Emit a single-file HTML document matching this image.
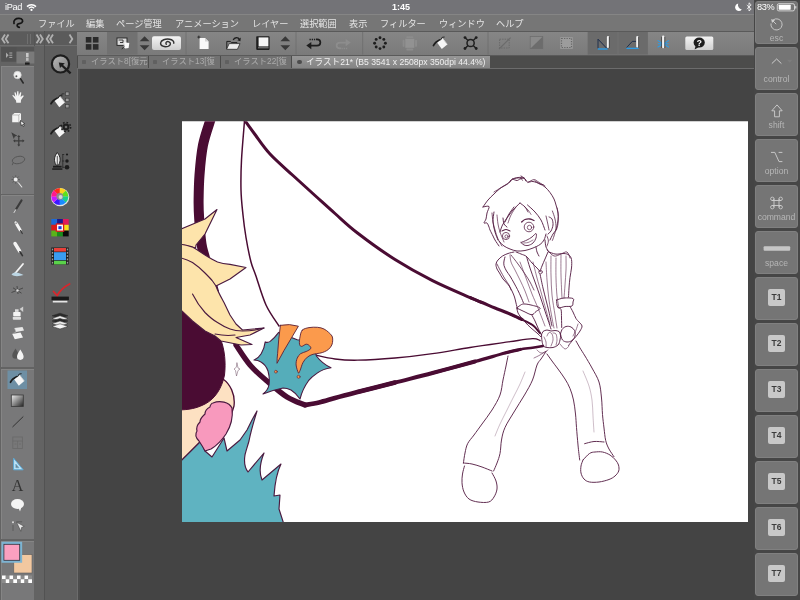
<!DOCTYPE html>
<html lang="ja">
<head>
<meta charset="utf-8">
<title>CLIP STUDIO PAINT</title>
<style>
*{box-sizing:border-box;margin:0;padding:0}
html,body{width:800px;height:600px;overflow:hidden;background:#444444}
body{position:relative;font-family:"Liberation Sans","Noto Sans CJK JP",sans-serif;color:#fff;-webkit-font-smoothing:antialiased}
.abs{position:absolute}
#status span,#menubar span,.tab,.key b,.key em,.st{will-change:transform}
#status{left:0;top:0;width:800px;height:14px;background:#737377}
#status span{position:absolute;top:1px;font-size:9.2px;line-height:12px;color:#fff;white-space:nowrap;letter-spacing:-0.35px}
#menubar{left:0;top:14px;width:800px;height:17px;background:#767676;border-top:1px solid #858585}
#menubar span{position:absolute;top:3px;font-size:9.2px;line-height:12px;color:#e4e4e4;white-space:nowrap}
#cmdbar{left:76px;top:31px;width:680px;height:24px;background:linear-gradient(#868686,#7a7a7a);border-top:1px solid #5a5a5a;border-left:1px solid #5a5a5a}
#tabrow{left:77px;top:55px;width:679px;height:14px;background:#4c4c4b;border-top:1px solid #5a5a5a;border-bottom:1px solid #6c6c6c}
.tab{position:absolute;top:0;height:11.6px;background:#717171;color:#ababab;font-size:8.3px;line-height:11.6px;white-space:nowrap;overflow:hidden;padding-left:13px}
.tab i{position:absolute;left:4.4px;top:4px;width:3.6px;height:3.6px;background:#606060;border-radius:.8px}
.tab.on{background:linear-gradient(#969696,#848484);color:#f0f0f0;font-size:8.6px;height:12.4px;top:-0.4px;line-height:12.4px;padding-left:14px}
.tab.on i{background:#4c4c4c;border-radius:2.2px;left:5.2px;top:3.6px;width:4.4px;height:4.4px}
#canvasbg{left:80px;top:69px;width:675px;height:531px;background:#444444}
#paper{left:182px;top:121px;width:566px;height:400px;background:#fff}
#col1{left:0;top:31px;width:44px;height:569px;background:#636363}
#col2{left:44px;top:31px;width:32.5px;height:569px;background:#5e5e5e;border-left:1px solid #525252}
#coldiv{left:76.5px;top:69px;width:3.5px;height:532px;background:#4b4b4b;border-left:1px solid #6c6c6c}
#navrow{left:0;top:31.5px;width:76.5px;height:14px;background:#5b5b5b;border-bottom:1px solid #6f6f6f}
.grp{position:absolute;left:1px;width:33px;background:#787879;border-left:1px solid #858585;border-top:1px solid #858585}
#right{left:754px;top:0;width:46px;height:600px;background:#464646}
.key{position:absolute;left:755px;width:43px;height:43px;background:#757575;border-radius:3px;border:1px solid #808080}
.key b{position:absolute;left:0;right:0;bottom:5px;text-align:center;font-weight:normal;font-size:8.6px;line-height:10px;color:#b6b6b6}
.key em{position:absolute;left:12.3px;top:10.8px;width:17px;height:17px;border-radius:2px;background:#c8c8c8;color:#3c3c3c;font-style:normal;font-weight:bold;font-size:8.5px;line-height:17px;text-align:center}
svg{position:absolute;left:0;top:0}
</style>
</head>
<body>
<div class="abs" id="canvasbg"></div>
<!--ARTS--><svg width="800" height="600" viewBox="0 0 800 600"><defs><clipPath id="pc"><rect x="182" y="121.25" width="566" height="400.75"/></clipPath></defs><rect x="182" y="121.25" width="566" height="400.75" fill="#fff"/>
<g clip-path="url(#pc)" fill="none" stroke-linecap="round" stroke-linejoin="round">
<path d="M211.0,118.0 C209.7,122.5 204.9,135.5 203.0,145.0 C201.1,154.5 200.2,165.8 199.5,175.0 C198.8,184.2 198.7,192.7 198.6,200.0 C198.5,207.3 198.7,211.7 199.2,219.0 C199.7,226.3 200.5,237.5 201.5,244.0 C202.5,250.5 202.9,250.0 205.0,258.0 C207.1,266.0 212.5,286.3 214.0,292.0" stroke="#4a0c33" stroke-width="10"/>
<path d="M176,400 L223,379 C230,384 235.5,394 234,406 L229,422 L220,437 L208,449 L201,441 L176,466 Z" fill="#fde1c2" stroke="#4a0c33" stroke-width="1.3"/>
<path d="M176,303 L192.5,320 L205,330 L215,335 L221,340 C224.5,350 226,362 224.5,375 C222,388 215,399 205,404 C197,408 190,410 176,410 Z" fill="#4a0c33" stroke="#4a0c33" stroke-width="1"/>
<path d="M176,466 L201,441 L205,451 L212,457 L224,438 L227,451 L240,440 L247,430 L252,420 L257,411 C253,424 250.5,433 249,441 C247,448 245.5,452 245,455 C244,461 245,468 248,472 L264,453 C260,463 259,473 262,480 L281,464 C277,472 275,481 274,496 L280,495 L279,509 L283.5,523 L176,523 Z" fill="#5fb3c1" stroke="#4a1a40" stroke-width="1.15"/>
<path d="M213,403 C220,400 229,402 232,408 C233,416 231,426 226,434 C222,440 216,446 211,449 L205,451 C203,447 201,444 199,441 C196,438 195,434 197,431 C196,427 198,424 200,422 C200,418 203,416 205,414 C205,410 208,408 210,407 C210,405 212,403 213,403 Z" fill="#f899bd" stroke="#4a1a40" stroke-width="1.15"/>
<path d="M236.0,345.0 C238.3,348.3 244.8,359.0 250.0,365.0 C255.2,371.0 260.8,375.7 267.0,381.0 C273.2,386.3 280.7,393.0 287.0,397.0 C293.3,401.0 302.0,403.7 305.0,405.0" stroke="#4a0c33" stroke-width="5.4"/>
<path d="M305.0,405.0 C307.3,404.6 314.0,403.7 319.0,402.5 C324.0,401.3 328.6,399.8 335.0,398.0 C341.4,396.2 347.5,394.6 357.5,392.0 C367.5,389.4 388.8,384.1 395.0,382.5" stroke="#4a0c33" stroke-width="4.6"/>
<path d="M357.5,392.0 C363.8,390.4 382.5,385.7 395.0,382.5 C407.5,379.3 419.2,376.5 432.5,373.0 C445.8,369.5 467.9,363.4 475.0,361.5" stroke="#4a0c33" stroke-width="3.9"/>
<path d="M432.5,373.0 C439.6,371.1 462.9,364.8 475.0,361.5 C487.1,358.2 497.5,355.0 505.0,353.0 C512.5,351.0 517.5,350.1 520.0,349.5" stroke="#4a0c33" stroke-width="3.3"/>
<path d="M505.0,353.0 C507.5,352.4 515.4,350.4 520.0,349.5 C524.6,348.6 528.7,348.3 532.5,347.7 C536.3,347.1 541.2,346.3 543.0,346.0" stroke="#4a0c33" stroke-width="2.4"/>
<path d="M315.0,355.0 C318.3,355.7 327.9,358.1 335.0,359.0 C342.1,359.9 347.5,360.4 357.5,360.2 C367.5,360.0 382.5,359.1 395.0,358.0 C407.5,356.9 420.0,355.4 432.5,353.6 C445.0,351.9 457.1,349.5 470.0,347.5 C482.9,345.5 499.6,343.2 510.0,341.7 C520.4,340.2 527.5,338.9 532.5,338.7 C537.5,338.5 538.8,340.2 540.0,340.5" stroke="#4a0c33" stroke-width="1.3"/>
<path d="M244.5,120.0 C246.2,122.4 250.8,128.8 255.0,134.5 C259.2,140.2 263.7,147.2 270.0,154.0 C276.3,160.8 285.5,168.6 293.0,175.5 C300.5,182.4 308.0,189.2 315.0,195.5 C322.0,201.8 327.9,207.2 335.0,213.5 C342.1,219.8 347.5,225.3 357.5,233.0 C367.5,240.7 382.5,251.6 395.0,259.5 C407.5,267.4 420.0,274.3 432.5,280.6 C445.0,286.9 461.8,293.9 470.0,297.5 C478.2,301.1 480.0,301.7 482.0,302.5" stroke="#4a0c33" stroke-width="3"/>
<path d="M470.0,297.5 C472.0,298.3 477.8,300.8 482.0,302.5 C486.2,304.2 490.3,306.1 495.0,308.0 C499.7,309.9 505.5,312.1 510.0,314.0 C514.5,315.9 520.0,318.6 522.0,319.5" stroke="#4a0c33" stroke-width="3.1"/>
<path d="M510.0,314.0 C512.0,314.9 518.2,317.7 522.0,319.5 C525.8,321.3 529.5,322.8 532.5,325.0 C535.5,327.2 538.8,331.7 540.0,333.0" stroke="#4a0c33" stroke-width="2"/>
<path d="M244.5,121.0 C244.0,127.5 242.1,148.5 241.5,160.0 C240.9,171.5 240.8,180.8 241.0,190.0 C241.2,199.2 242.2,207.1 243.0,215.0 C243.8,222.9 244.7,229.7 246.0,237.5 C247.3,245.3 249.4,255.8 251.0,262.0 C252.6,268.2 253.1,267.8 255.6,275.0 C258.1,282.2 262.1,296.5 266.0,305.0 C269.9,313.5 276.8,322.5 279.0,326.0" stroke="#4a0c33" stroke-width="1.5"/>
<path d="M181,229 L205,219 L217,209.5 L205,234 L196,245 L195.6,248 L181,244.4 Z" fill="#fde4ab" stroke="#4a1a40" stroke-width="1.15"/>
<path d="M181,244.4 C186,245 189,246 192.5,247 C197,249.5 201,252.5 205,255 C209,257.5 213,260 217.5,262 C222,263.5 226,264 230,264.4 L246,267.5 L230,279 L216,286 C218,292 221,297 224,302.5 L230,315 L236,324 L242.5,330 L264,328 L250,335 L236,337.5 L252,344.5 L241,345 L221,341 L215,336 L205,331 L192.5,321 L181,310 Z" fill="#fde4ab" stroke="#4a1a40" stroke-width="1.15"/>
<path d="M181,258 C186,259 189,260.5 192.5,262.5 C197,265.5 201,269 205,273 C208,276 211,279 212.5,281 L216,286" stroke="#4a1a40" stroke-width="1.15"/>
<path d="M192.5,294 C196,301 200,307 205,312.5 C209,316.5 213,320 217.5,322.5 C222,325.5 226,327.5 230,329 C234,330.5 238,331 242.5,331 C250,331 257,330 264,328" stroke="#4a1a40" stroke-width="1.15"/>
<path d="M215,334 C222,335.5 228,336 235,335" stroke="#4a1a40" stroke-width="1.15"/>
<path d="M254,360 Q259,357.5 261.2,353.7 Q264.5,348 265.2,341.9 Q267.5,343 270.2,341.4 Q275,337.5 278.7,332.4 L297.2,339.8 L306,341 L314,346 L316.4,356 Q322,363.5 331,367.8 Q323,369 317.5,372.9 Q311.5,377 308.5,380.7 Q302.5,389 300,399 Q296,393 291,390 Q287,388 283,388 Q273,390 263,394 Q268,390 269,385 Q270,378 268,371 Q266,365 261,362 Q258,360 254,360 Z" fill="#55adba" stroke="#4a1a40" stroke-width="1.1"/>
<path d="M280.4,325.3 Q289.4,323.4 298.4,326.2 Q292,337 284,350.5 L277,363.3 Q277,358 277.6,353.7 Q278.5,339 280.4,325.3 Z" fill="#fb9a4c" stroke="#5a2038" stroke-width="0.9"/>
<circle cx="275.9" cy="371.7" r="1.4" fill="#fb9a4c" stroke="#5a2038" stroke-width="0.6"/>
<path d="M302.3,330.1 C303.8,328.6 306.5,328.1 309.0,327.6 C311.5,327.1 315.0,327.1 317.5,327.3 C320.0,327.5 322.1,328.1 324.0,329.0 C325.9,329.9 327.4,331.2 328.7,332.4 C330.0,333.6 331.3,334.7 332.0,336.0 C332.7,337.3 332.7,338.7 332.7,340.2 C332.7,341.7 332.5,343.5 331.8,345.0 C331.1,346.5 329.9,348.1 328.7,349.2 C327.5,350.3 326.0,351.0 324.5,351.7 C323.0,352.4 321.6,352.8 319.7,353.2 C317.8,353.6 315.1,353.6 313.0,354.3 C310.9,355.0 309.1,355.7 307.4,357.1 C305.7,358.5 304.1,360.4 302.9,362.7 C301.7,364.9 300.8,368.9 300.0,370.6 C299.2,372.3 299.0,373.8 298.4,372.9 C297.8,372.0 296.3,367.4 296.1,365.0 C295.9,362.6 296.4,360.1 297.2,358.2 C297.9,356.3 299.1,354.8 300.6,353.7 C302.1,352.6 304.5,352.3 306.2,351.5 C307.9,350.7 310.1,349.6 310.7,348.7 C311.3,347.8 310.4,346.6 309.6,345.9 C308.9,345.1 307.5,344.1 306.2,344.2 C304.9,344.3 302.8,346.4 301.7,346.4 C300.6,346.4 299.8,345.8 299.5,344.2 C299.2,342.6 299.5,339.2 300.0,336.9 C300.5,334.5 300.8,331.7 302.3,330.1 Z" fill="#fb9a4c" stroke="#5a2038" stroke-width="0.9"/>
<circle cx="298.6" cy="376.8" r="1.5" fill="#fb9a4c" stroke="#5a2038" stroke-width="0.6"/>
<path d="M237,363 L238,368 L240,369 L238,370.5 L236.5,376 L235.5,370.5 L234,369 L236,367.5 Z" stroke="#6a4a60" stroke-width="0.5" fill="#fff"/>
<path d="M483.0,207.0 C483.8,205.8 486.2,202.2 488.0,200.0 C489.8,197.8 492.0,195.9 494.0,194.0 C496.0,192.1 497.8,190.2 500.0,188.5 C502.2,186.8 505.8,185.2 507.5,184.0 C509.2,182.8 509.2,181.8 510.0,181.0 C510.8,180.2 511.2,179.6 512.5,179.0 C513.8,178.4 516.1,177.7 518.0,177.5 C519.9,177.3 522.4,177.2 524.0,178.0 C525.6,178.8 526.0,181.4 527.5,182.0 C529.0,182.6 530.9,181.2 533.0,181.5 C535.1,181.8 538.0,183.1 540.0,184.0 C542.0,184.9 543.3,185.6 545.0,187.0 C546.7,188.4 548.5,190.5 550.0,192.5 C551.5,194.5 553.0,196.9 554.0,199.0 C555.0,201.1 555.3,202.7 556.0,205.0 C556.7,207.3 557.7,210.5 558.0,213.0 C558.3,215.5 558.2,217.8 558.0,220.0 C557.8,222.2 557.3,224.3 557.0,226.0 C556.7,227.7 556.7,228.7 556.0,230.0 C555.3,231.3 554.0,232.3 553.0,234.0 C552.0,235.7 550.5,239.0 550.0,240.0" stroke="#5a2449" stroke-width="0.95"/>
<path d="M483.0,207.0 C484.0,206.9 488.3,205.5 489.0,206.5 C489.7,207.5 487.5,210.9 487.0,213.0 C486.5,215.1 486.5,217.3 486.0,219.0 C485.5,220.7 483.8,222.3 484.0,223.0 C484.2,223.7 486.2,222.3 487.0,223.0 C487.8,223.7 488.5,225.8 489.0,227.0 C489.5,228.2 489.3,228.5 490.0,230.0 C490.7,231.5 492.2,234.3 493.0,236.0 C493.8,237.7 494.0,238.3 495.0,240.0 C496.0,241.7 498.3,245.0 499.0,246.0" stroke="#5a2449" stroke-width="0.95"/>
<path d="M512.5,179.0 C513.2,179.2 515.8,180.5 517.0,180.5 C518.2,180.5 518.8,179.4 520.0,179.0 C521.2,178.6 523.3,178.2 524.0,178.0" stroke="#5a2449" stroke-width="0.95"/>
<path d="M521.0,176.0 C521.5,176.3 523.2,177.2 524.0,178.0 C524.8,178.8 525.7,180.5 526.0,181.0" stroke="#5a2449" stroke-width="0.95"/>
<path d="M535.0,181.0 C535.8,181.5 538.7,183.4 540.0,184.0 C541.3,184.6 542.5,184.4 543.0,184.5" stroke="#5a2449" stroke-width="0.95"/>
<path d="M520.0,203.0 C518.8,204.2 515.2,207.5 513.0,210.0 C510.8,212.5 508.8,215.5 507.0,218.0 C505.2,220.5 503.7,222.7 502.5,225.0 C501.3,227.3 500.4,230.8 500.0,232.0" stroke="#5a2449" stroke-width="0.95"/>
<path d="M520.0,203.0 C520.8,203.7 523.7,205.5 525.0,207.0 C526.3,208.5 527.5,211.2 528.0,212.0" stroke="#5a2449" stroke-width="0.95"/>
<path d="M527.5,205.0 C528.8,206.2 532.8,209.5 535.0,212.0 C537.2,214.5 539.3,217.0 541.0,220.0 C542.7,223.0 544.3,228.3 545.0,230.0" stroke="#5a2449" stroke-width="0.95"/>
<path d="M514.0,207.0 C513.2,208.2 510.5,211.5 509.0,214.0 C507.5,216.5 505.7,220.7 505.0,222.0" stroke="#5a2449" stroke-width="0.95"/>
<path d="M494.0,212.0 C493.8,213.7 492.8,218.7 493.0,222.0 C493.2,225.3 494.2,229.0 495.0,232.0 C495.8,235.0 497.5,238.7 498.0,240.0" stroke="#5a2449" stroke-width="0.95"/>
<path d="M503.0,218.0 C503.2,219.0 503.3,222.5 504.0,224.0 C504.7,225.5 506.5,226.5 507.0,227.0" stroke="#5a2449" stroke-width="0.95"/>
<path d="M549.0,217.0 C549.5,217.3 551.3,217.7 552.0,219.0 C552.7,220.3 553.2,223.0 553.0,225.0 C552.8,227.0 551.8,229.5 551.0,231.0 C550.2,232.5 548.5,233.5 548.0,234.0" stroke="#5a2449" stroke-width="0.95"/>
<path d="M499.5,241.5 C500.2,242.2 502.2,244.8 504.0,246.0 C505.8,247.2 507.8,248.2 510.0,249.0 C512.2,249.8 514.5,250.8 517.0,251.0 C519.5,251.2 522.3,251.0 525.0,250.5 C527.7,250.0 530.5,249.0 533.0,248.0 C535.5,247.0 538.2,245.8 540.0,244.5 C541.8,243.2 543.0,241.8 544.0,240.0 C545.0,238.2 545.7,235.0 546.0,234.0" stroke="#5a2449" stroke-width="0.95"/>
<path d="M502.0,231.0 C502.7,230.8 504.7,229.5 506.0,229.5 C507.3,229.5 509.3,230.8 510.0,231.0" stroke="#5a2449" stroke-width="1.1"/>
<circle cx="506" cy="236" r="3.6" stroke="#5a2449" stroke-width="0.8"/>
<circle cx="506.5" cy="236.5" r="1.6" stroke="#5a2449" stroke-width="0.7"/>
<path d="M521.5,222.0 C522.1,221.6 523.6,220.0 525.0,219.5 C526.4,219.0 528.5,218.8 530.0,219.0 C531.5,219.2 533.3,220.2 534.0,220.5" stroke="#5a2449" stroke-width="1.3"/>
<circle cx="529" cy="227" r="4.8" stroke="#5a2449" stroke-width="0.8"/>
<circle cx="529.5" cy="227.5" r="2.2" stroke="#5a2449" stroke-width="0.7"/>
<path d="M521.0,242.5 C522.0,242.1 525.2,240.9 527.0,240.0 C528.8,239.1 530.5,238.1 532.0,237.0 C533.5,235.9 535.3,233.3 536.0,233.5 C536.7,233.7 536.5,236.4 536.0,238.0 C535.5,239.6 534.3,241.8 533.0,243.0 C531.7,244.2 529.5,245.2 528.0,245.5 C526.5,245.8 525.2,245.5 524.0,245.0 C522.8,244.5 521.5,242.9 521.0,242.5" stroke="#5a2449" stroke-width="0.9"/>
<path d="M523.0,243.0 C523.8,242.9 526.3,243.0 528.0,242.5 C529.7,242.0 532.2,240.4 533.0,240.0" stroke="#5a2449" stroke-width="0.6"/>
<path d="M536.0,247.0 C536.2,247.8 536.5,250.5 537.0,252.0 C537.5,253.5 538.7,255.3 539.0,256.0" stroke="#5a2449" stroke-width="0.95"/>
<path d="M545.0,240.0 C545.2,241.2 545.3,245.0 546.0,247.0 C546.7,249.0 548.5,251.2 549.0,252.0" stroke="#5a2449" stroke-width="0.95"/>
<path d="M514.0,252.0 C513.0,252.2 509.9,252.8 508.0,253.5 C506.1,254.2 504.2,254.9 502.5,256.0 C500.8,257.1 499.1,258.7 498.0,260.0 C496.9,261.3 496.2,262.5 496.0,264.0 C495.8,265.5 496.4,267.5 497.0,269.0 C497.6,270.5 498.5,271.3 499.5,273.0 C500.5,274.7 501.5,277.0 503.0,279.0 C504.5,281.0 507.0,283.0 508.5,285.0 C510.0,287.0 511.0,289.0 512.0,291.0 C513.0,293.0 513.8,295.0 514.5,297.0 C515.2,299.0 515.5,301.0 516.0,303.0 C516.5,305.0 517.2,308.0 517.5,309.0" stroke="#5a2449" stroke-width="0.95"/>
<path d="M505.0,257.0 C504.8,257.7 504.2,259.6 504.0,261.0 C503.8,262.4 503.6,263.8 504.0,265.5 C504.4,267.2 505.5,269.2 506.5,271.0 C507.5,272.8 508.8,274.0 510.0,276.0 C511.2,278.0 512.8,280.8 514.0,283.0 C515.2,285.2 516.3,287.2 517.5,289.5 C518.7,291.8 520.0,294.8 521.0,297.0 C522.0,299.2 523.1,302.0 523.5,303.0" stroke="#5a2449" stroke-width="0.95"/>
<path d="M510.0,255.0 C510.2,256.2 510.2,259.5 511.0,262.0 C511.8,264.5 513.5,267.0 515.0,270.0 C516.5,273.0 518.3,276.5 520.0,280.0 C521.7,283.5 523.5,287.3 525.0,291.0 C526.5,294.7 528.3,300.2 529.0,302.0" stroke="#5a2449" stroke-width="0.6"/>
<path d="M516.0,252.0 C516.8,252.3 519.2,253.2 521.0,254.0 C522.8,254.8 524.7,255.0 526.5,256.5 C528.3,258.0 530.2,261.1 532.0,263.0 C533.8,264.9 535.7,266.6 537.0,268.0 C538.3,269.4 539.5,270.9 540.0,271.5" stroke="#5a2449" stroke-width="0.95"/>
<path d="M548.0,252.0 C547.5,253.2 546.0,256.7 545.0,259.0 C544.0,261.3 542.8,263.9 542.0,266.0 C541.2,268.1 540.3,270.6 540.0,271.5" stroke="#5a2449" stroke-width="0.95"/>
<circle cx="540.5" cy="272" r="1.8" stroke="#5a2449" stroke-width="0.7"/>
<path d="M526.5,256.5 C527.1,258.4 528.6,263.8 530.0,268.0 C531.4,272.2 533.3,277.3 535.0,282.0 C536.7,286.7 538.5,291.7 540.0,296.0 C541.5,300.3 542.7,304.0 544.0,308.0 C545.3,312.0 546.8,316.5 548.0,320.0 C549.2,323.5 550.5,327.5 551.0,329.0" stroke="#5a2449" stroke-width="0.95"/>
<path d="M540.0,274.0 C540.5,276.3 542.0,283.7 543.0,288.0 C544.0,292.3 545.0,296.0 546.0,300.0 C547.0,304.0 548.0,307.7 549.0,312.0 C550.0,316.3 551.5,323.7 552.0,326.0" stroke="#5a2449" stroke-width="0.95"/>
<path d="M533.0,262.0 C533.7,264.7 535.7,273.0 537.0,278.0 C538.3,283.0 539.5,286.7 541.0,292.0 C542.5,297.3 544.5,304.7 546.0,310.0 C547.5,315.3 549.3,321.7 550.0,324.0" stroke="#5a2449" stroke-width="0.6"/>
<path d="M520.0,262.0 C521.0,264.7 524.0,272.7 526.0,278.0 C528.0,283.3 530.0,289.0 532.0,294.0 C534.0,299.0 535.8,302.7 538.0,308.0 C540.2,313.3 543.8,323.0 545.0,326.0" stroke="#5a2449" stroke-width="0.6"/>
<path d="M546.0,262.0 C546.2,265.0 546.5,273.7 547.0,280.0 C547.5,286.3 548.2,293.7 549.0,300.0 C549.8,306.3 551.2,313.3 552.0,318.0 C552.8,322.7 553.7,326.3 554.0,328.0" stroke="#5a2449" stroke-width="0.6"/>
<path d="M551.0,256.0 C551.0,259.2 550.8,268.5 551.0,275.0 C551.2,281.5 551.3,288.3 552.0,295.0 C552.7,301.7 554.2,309.5 555.0,315.0 C555.8,320.5 556.7,325.8 557.0,328.0" stroke="#5a2449" stroke-width="0.6"/>
<path d="M556.0,258.0 C556.0,261.3 555.8,271.7 556.0,278.0 C556.2,284.3 556.5,291.0 557.0,296.0 C557.5,301.0 558.7,306.0 559.0,308.0" stroke="#5a2449" stroke-width="0.6"/>
<path d="M561.0,255.0 C561.0,258.3 560.8,267.8 561.0,275.0 C561.2,282.2 561.8,294.2 562.0,298.0" stroke="#5a2449" stroke-width="0.6"/>
<path d="M549.0,252.0 C550.0,252.3 553.3,253.7 555.0,254.0 C556.7,254.3 557.5,254.1 559.0,254.0 C560.5,253.9 562.3,253.3 564.0,253.5 C565.7,253.7 567.8,254.0 569.0,255.0 C570.2,256.0 571.1,257.3 571.5,259.5 C571.9,261.7 571.8,265.0 571.5,268.0 C571.2,271.0 570.4,274.2 570.0,277.5 C569.6,280.8 569.2,284.8 569.0,288.0 C568.8,291.2 568.6,295.5 568.5,297.0" stroke="#5a2449" stroke-width="0.95"/>
<path d="M566.0,256.0 C566.0,258.3 566.2,265.2 566.0,270.0 C565.8,274.8 565.3,280.3 565.0,285.0 C564.7,289.7 564.2,295.8 564.0,298.0" stroke="#5a2449" stroke-width="0.6"/>
<path d="M556.5,300.0 C557.8,299.7 561.2,298.2 564.0,298.0 C566.8,297.8 571.5,297.8 573.0,298.5 C574.5,299.2 573.2,300.8 573.0,302.0 C572.8,303.2 573.3,305.2 572.0,306.0 C570.7,306.8 567.3,306.2 565.0,306.5 C562.7,306.8 559.4,308.6 558.0,307.5 C556.6,306.4 556.8,301.2 556.5,300.0" stroke="#5a2449" stroke-width="0.95"/>
<path d="M558.0,307.5 C558.5,307.8 560.4,307.8 561.0,309.5 C561.6,311.2 561.4,315.0 561.5,318.0 C561.6,321.0 561.7,325.9 561.7,327.5" stroke="#5a2449" stroke-width="0.95"/>
<path d="M570.0,306.5 C570.5,307.4 572.0,310.0 573.0,312.0 C574.0,314.0 575.0,316.8 576.0,318.5 C577.0,320.2 578.0,320.8 579.0,322.0 C580.0,323.2 581.8,324.5 582.0,326.0 C582.2,327.5 581.0,329.2 580.0,331.0 C579.0,332.8 577.3,334.8 576.0,336.5 C574.7,338.2 573.2,339.5 572.0,341.0 C570.8,342.5 569.1,344.8 568.5,345.5" stroke="#5a2449" stroke-width="0.95"/>
<path d="M578.0,324.0 C577.7,325.0 576.8,328.0 576.0,330.0 C575.2,332.0 573.5,335.0 573.0,336.0" stroke="#5a2449" stroke-width="0.6"/>
<path d="M516.7,308.0 C517.2,307.6 518.9,306.2 520.0,305.5 C521.1,304.8 521.7,304.1 523.5,304.0 C525.3,303.9 528.2,304.3 531.0,305.0 C533.8,305.7 539.2,306.9 540.0,308.0 C540.8,309.1 537.4,310.4 536.0,311.5 C534.6,312.6 533.7,314.7 531.7,314.7 C529.7,314.7 526.5,312.6 524.0,311.5 C521.5,310.4 517.9,308.6 516.7,308.0" stroke="#5a2449" stroke-width="0.95"/>
<path d="M517.0,309.0 C517.2,309.7 517.5,311.8 518.0,313.0 C518.5,314.2 519.7,315.5 520.0,316.0" stroke="#5a2449" stroke-width="0.95"/>
<path d="M531.7,314.7 C532.2,315.8 533.9,318.6 535.0,321.0 C536.1,323.4 537.4,326.7 538.5,329.0 C539.6,331.3 541.0,334.0 541.5,335.0" stroke="#5a2449" stroke-width="0.95"/>
<path d="M520.0,316.0 C520.8,317.0 523.2,320.0 525.0,322.0 C526.8,324.0 529.0,326.2 531.0,328.0 C533.0,329.8 535.3,331.5 537.0,333.0 C538.7,334.5 540.3,336.3 541.0,337.0" stroke="#5a2449" stroke-width="0.95"/>
<path d="M541.5,335.0 C541.8,334.4 542.1,332.3 543.0,331.5 C543.9,330.7 545.7,330.1 547.0,330.0 C548.3,329.9 549.7,330.9 551.0,331.0 C552.3,331.1 553.7,330.4 555.0,330.5 C556.3,330.6 558.1,330.8 559.0,331.5 C559.9,332.2 560.3,333.6 560.5,335.0 C560.7,336.4 560.4,338.3 560.0,340.0 C559.6,341.7 559.2,343.8 558.0,345.0 C556.8,346.2 554.8,347.1 553.0,347.5 C551.2,347.9 548.6,347.8 547.0,347.5 C545.4,347.2 544.3,347.1 543.5,346.0 C542.7,344.9 542.3,342.8 542.0,341.0 C541.7,339.2 541.6,336.0 541.5,335.0" stroke="#5a2449" stroke-width="0.95"/>
<path d="M547.0,336.0 C547.3,335.4 548.2,332.8 549.0,332.5 C549.8,332.2 551.3,332.8 552.0,334.0 C552.7,335.2 553.2,338.0 553.0,340.0 C552.8,342.0 551.3,345.0 551.0,346.0" stroke="#5a2449" stroke-width="0.6"/>
<path d="M553.0,333.0 C553.5,333.2 555.3,332.8 556.0,334.0 C556.7,335.2 557.0,338.2 557.0,340.0 C557.0,341.8 556.2,344.2 556.0,345.0" stroke="#5a2449" stroke-width="0.6"/>
<path d="M544.0,337.0 C544.3,337.8 545.7,340.3 546.0,342.0 C546.3,343.7 546.0,346.2 546.0,347.0" stroke="#5a2449" stroke-width="0.6"/>
<path d="M560.5,334.0 C560.8,333.2 561.1,330.8 562.0,329.5 C562.9,328.2 564.5,326.9 566.0,326.5 C567.5,326.1 569.6,326.3 571.0,327.0 C572.4,327.7 573.8,329.0 574.5,330.5 C575.2,332.0 575.4,334.3 575.0,336.0 C574.6,337.7 573.3,339.5 572.0,340.5 C570.7,341.5 568.6,342.1 567.0,342.0 C565.4,341.9 563.6,341.3 562.5,340.0 C561.4,338.7 560.8,335.0 560.5,334.0" stroke="#5a2449" stroke-width="0.95"/>
<path d="M560.0,344.0 C560.8,344.8 563.5,348.7 565.0,349.0 C566.5,349.3 568.3,346.5 569.0,346.0" stroke="#5a2449" stroke-width="0.6"/>
<path d="M508.0,356.0 C507.7,357.7 506.8,362.0 506.0,366.0 C505.2,370.0 504.0,375.2 503.0,380.0 C502.0,384.8 501.8,390.0 500.0,395.0 C498.2,400.0 495.0,405.2 492.0,410.0 C489.0,414.8 485.0,419.8 482.0,424.0 C479.0,428.2 476.4,431.7 474.0,435.0 C471.6,438.3 469.1,440.7 467.6,443.7 C466.1,446.7 465.7,449.8 465.0,453.0 C464.3,456.2 463.7,461.3 463.4,463.0" stroke="#5a2449" stroke-width="0.95"/>
<path d="M546.0,351.5 C545.2,352.8 542.5,356.8 541.0,359.0 C539.5,361.2 538.4,361.5 537.0,365.0 C535.6,368.5 534.6,375.0 532.5,380.0 C530.4,385.0 527.6,389.7 524.5,395.0 C521.4,400.3 517.2,406.6 514.0,412.0 C510.8,417.4 507.1,422.8 505.0,427.5 C502.9,432.2 502.3,435.7 501.5,440.0 C500.7,444.3 500.8,449.7 500.0,453.5 C499.2,457.3 498.1,460.1 497.0,463.0 C495.9,465.9 494.2,469.7 493.6,471.0" stroke="#5a2449" stroke-width="0.95"/>
<path d="M463.4,463.0 C464.8,463.2 468.9,463.3 472.0,464.0 C475.1,464.7 478.7,465.8 482.0,467.0 C485.3,468.2 490.3,470.3 492.0,471.0" stroke="#5a2449" stroke-width="0.95"/>
<path d="M525.0,372.0 C524.2,374.0 521.8,380.0 520.0,384.0 C518.2,388.0 516.2,391.7 514.0,396.0 C511.8,400.3 509.3,405.3 507.0,410.0 C504.7,414.7 502.0,419.7 500.0,424.0 C498.0,428.3 495.8,434.0 495.0,436.0" stroke="#5a2449" stroke-width="0.5" opacity="0.6"/>
<path d="M537.0,350.0 C537.7,350.5 539.5,352.8 541.0,353.0 C542.5,353.2 545.2,351.8 546.0,351.5" stroke="#5a2449" stroke-width="0.6"/>
<path d="M548.0,350.0 C546.7,350.8 542.3,353.7 540.0,355.0 C537.7,356.3 535.0,357.5 534.0,358.0" stroke="#5a2449" stroke-width="0.6"/>
<path d="M464.5,466.0 C464.2,467.3 462.9,471.2 462.5,474.0 C462.1,476.8 461.8,479.7 462.0,482.7 C462.2,485.7 462.8,489.3 464.0,492.0 C465.2,494.7 466.7,497.3 469.0,499.0 C471.3,500.7 474.7,501.5 478.0,502.0 C481.3,502.5 486.0,502.8 488.7,502.0 C491.4,501.2 492.6,499.2 494.0,497.0 C495.4,494.8 496.7,491.7 497.0,489.0 C497.3,486.3 496.8,483.7 496.0,481.0 C495.2,478.3 492.7,474.3 492.0,473.0" stroke="#5a2449" stroke-width="0.95"/>
<path d="M547.0,354.0 C547.8,355.2 550.2,358.5 552.0,361.0 C553.8,363.5 555.8,366.0 558.0,369.0 C560.2,372.0 563.0,375.8 565.0,379.0 C567.0,382.2 568.6,385.0 570.0,388.5 C571.4,392.0 572.6,395.8 573.5,400.0 C574.4,404.2 575.0,409.4 575.5,414.0 C576.0,418.6 576.1,422.3 576.5,427.5 C576.9,432.7 577.5,439.6 578.0,445.0 C578.5,450.4 579.4,457.5 579.7,460.0" stroke="#5a2449" stroke-width="0.95"/>
<path d="M576.0,341.0 C576.7,342.2 578.5,345.5 580.0,348.0 C581.5,350.5 583.0,352.7 585.0,356.0 C587.0,359.3 589.7,363.7 592.0,368.0 C594.3,372.3 597.4,377.0 599.0,382.0 C600.6,387.0 600.9,392.6 601.5,398.0 C602.1,403.4 602.1,409.5 602.5,414.5 C602.9,419.5 603.5,423.7 604.0,428.0 C604.5,432.3 604.9,437.0 605.7,440.5 C606.5,444.0 607.6,446.3 609.0,449.0 C610.4,451.7 613.2,455.4 614.0,456.7" stroke="#5a2449" stroke-width="0.95"/>
<path d="M584.6,443.7 C586.2,443.3 590.8,441.8 594.0,441.5 C597.2,441.2 602.3,441.9 604.0,442.0" stroke="#5a2449" stroke-width="0.95"/>
<path d="M583.0,371.0 C584.0,373.5 587.5,381.2 589.0,386.0 C590.5,390.8 591.3,395.0 592.0,400.0 C592.7,405.0 592.7,410.7 593.0,416.0 C593.3,421.3 593.8,429.3 594.0,432.0" stroke="#5a2449" stroke-width="0.5" opacity="0.6"/>
<path d="M583.0,460.0 C582.7,461.0 581.3,463.8 581.0,466.0 C580.7,468.2 580.5,470.8 581.0,473.0 C581.5,475.2 582.6,477.5 584.0,479.0 C585.4,480.5 587.0,481.5 589.5,482.0 C592.0,482.5 595.8,482.4 599.0,482.0 C602.2,481.6 606.3,480.5 609.0,479.5 C611.7,478.5 613.4,477.4 615.0,476.0 C616.6,474.6 618.1,472.8 618.7,471.0 C619.3,469.2 619.0,466.8 618.5,465.0 C618.0,463.2 616.9,461.7 615.5,460.0 C614.1,458.3 612.2,456.3 610.0,455.0 C607.8,453.7 605.0,452.5 602.5,452.0 C600.0,451.5 597.2,451.8 595.0,452.0 C592.8,452.2 591.5,452.2 589.5,453.5 C587.5,454.8 584.1,458.9 583.0,460.0" stroke="#5a2449" stroke-width="0.95"/>
<path d="M494.0,192.0 C495.3,191.2 499.3,188.7 502.0,187.0 C504.7,185.3 508.2,183.3 510.0,182.0 C511.8,180.7 511.3,179.7 513.0,179.0 C514.7,178.3 518.4,177.8 520.0,178.0 C521.6,178.2 522.0,180.0 522.4,180.4" stroke="#5a2449" stroke-width="0.8"/>
<path d="M528.0,182.4 C529.0,181.9 532.2,179.6 534.0,179.6 C535.8,179.6 537.2,181.3 539.0,182.4 C540.8,183.5 544.0,185.4 545.0,186.0" stroke="#5a2449" stroke-width="0.8"/>
<path d="M492.0,213.0 C492.2,214.5 492.5,219.2 493.0,222.0 C493.5,224.8 494.2,227.2 495.0,230.0 C495.8,232.8 496.8,236.3 498.0,239.0 C499.2,241.7 501.3,244.8 502.0,246.0" stroke="#5a2449" stroke-width="0.8"/>
<path d="M497.0,215.0 C497.2,216.5 497.5,221.2 498.0,224.0 C498.5,226.8 499.0,229.0 500.0,232.0 C501.0,235.0 503.3,240.3 504.0,242.0" stroke="#5a2449" stroke-width="0.7"/>
<path d="M546.0,216.0 C546.3,217.2 547.1,220.7 547.6,223.0 C548.1,225.3 548.8,228.8 549.0,230.0" stroke="#5a2449" stroke-width="0.8"/>
<path d="M552.4,211.0 C552.8,212.3 554.4,216.2 555.0,219.0 C555.6,221.8 556.2,225.2 556.0,228.0 C555.8,230.8 554.6,233.9 554.0,236.0 C553.4,238.1 552.7,239.7 552.4,240.4" stroke="#5a2449" stroke-width="0.8"/>
<path d="M557.2,208.0 C557.4,209.3 558.3,213.3 558.4,216.0 C558.5,218.7 558.3,221.7 558.0,224.0 C557.7,226.3 556.7,229.0 556.4,230.0" stroke="#5a2449" stroke-width="0.7"/>
<path d="M516.0,207.0 C515.2,208.3 512.3,212.3 511.0,215.0 C509.7,217.7 508.5,221.7 508.0,223.0" stroke="#5a2449" stroke-width="0.7"/>
<path d="M524.0,206.0 C524.7,206.7 526.8,208.6 528.0,210.0 C529.2,211.4 530.5,213.7 531.0,214.4" stroke="#5a2449" stroke-width="0.7"/>
<path d="M547.0,236.0 C547.2,236.8 548.4,239.3 548.4,241.0 C548.4,242.7 547.2,245.2 547.0,246.0" stroke="#5a2449" stroke-width="0.8"/>
<path d="M511.0,255.0 C512.2,256.5 515.7,260.8 518.0,264.0 C520.3,267.2 523.0,271.0 525.0,274.0 C527.0,277.0 528.5,279.3 530.0,282.0 C531.5,284.7 533.3,288.7 534.0,290.0" stroke="#5a2449" stroke-width="0.8"/>
<path d="M497.0,264.0 C497.5,265.0 498.7,267.5 500.0,270.0 C501.3,272.5 503.5,276.5 505.0,279.0 C506.5,281.5 508.0,283.2 509.0,285.0 C510.0,286.8 510.7,289.2 511.0,290.0" stroke="#5a2449" stroke-width="0.8"/>
<path d="M547.0,250.0 C548.2,251.0 551.7,255.3 554.0,256.0 C556.3,256.7 558.8,254.7 561.0,254.0 C563.2,253.3 565.5,251.3 567.0,252.0 C568.5,252.7 569.5,257.0 570.0,258.0" stroke="#5a2449" stroke-width="0.8"/>
</g></svg><!--ARTE-->
<div class="abs" id="status">
<span style="left:5px">iPad</span>
<span style="left:392px;font-weight:bold;font-size:9px;letter-spacing:0">1:45</span>
</div>
<div class="abs" id="menubar">
<span style="left:38px">ファイル</span>
<span style="left:86px">編集</span>
<span style="left:116px">ページ管理</span>
<span style="left:175px">アニメーション</span>
<span style="left:252px">レイヤー</span>
<span style="left:300px">選択範囲</span>
<span style="left:349px">表示</span>
<span style="left:380px">フィルター</span>
<span style="left:439px">ウィンドウ</span>
<span style="left:496px">ヘルプ</span>
</div>
<div class="abs" id="cmdbar"></div>
<div class="abs" id="tabrow">
<div class="tab" style="left:0.6px;width:69.6px"><i></i>イラスト8[復元</div>
<div class="tab" style="left:71.6px;width:70.6px"><i></i>イラスト13[復</div>
<div class="tab" style="left:143.6px;width:70px"><i></i>イラスト22[復</div>
<div class="tab on" style="left:215.3px;width:198.2px"><i></i>イラスト21* (B5 3541 x 2508px 350dpi 44.4%)</div>
</div>
<div class="abs" id="col1"></div>
<div class="abs" id="col2"></div>
<div class="abs" id="coldiv"></div>
<div class="abs" id="navrow"></div>
<div class="grp" style="top:65.5px;height:128px"></div>
<div class="grp" style="top:195px;height:172px"></div>
<div class="grp" style="top:369px;height:170px"></div>
<div class="grp" style="top:541px;height:60px"></div>
<!--ICONSS--><svg width="800" height="600" viewBox="0 0 800 600" fill="none">
<defs><linearGradient id="lg" x1="0" y1="0" x2="0" y2="1"><stop offset="0" stop-color="#f4f4f4"/><stop offset="1" stop-color="#cfcfcf"/></linearGradient><linearGradient id="qg" x1="0" y1="0" x2="1" y2="1"><stop offset="0" stop-color="#bcbcbc"/><stop offset="1" stop-color="#787878"/></linearGradient><linearGradient id="gg" x1="0" y1="0" x2="1" y2="1"><stop offset="0" stop-color="#f2f2f2"/><stop offset="1" stop-color="#222"/></linearGradient></defs>
<path d="M14,23.5 C13,20 16,18.2 19,18.3 C22.5,18.4 23.5,21 21.8,22.6 C20,24 17.5,23.3 17.2,24.8 C17,26 18,27 19.3,27.3" stroke="#141414" stroke-width="1.7" stroke-linecap="round"/>
<path d="M5,34.6 l-2.8,4.3 l2.8,4.3" stroke="#b0b0b0" stroke-width="1.8"/>
<path d="M8.5,34.6 l-2.8,4.3 l2.8,4.3" stroke="#b0b0b0" stroke-width="1.8"/>
<path d="M36.5,34.6 l2.8,4.3 l-2.8,4.3" stroke="#b0b0b0" stroke-width="1.8"/>
<path d="M40,34.6 l2.8,4.3 l-2.8,4.3" stroke="#b0b0b0" stroke-width="1.8"/>
<path d="M49.5,34.6 l-2.8,4.3 l2.8,4.3" stroke="#b0b0b0" stroke-width="1.8"/>
<path d="M53,34.6 l-2.8,4.3 l2.8,4.3" stroke="#b0b0b0" stroke-width="1.8"/>
<path d="M69.5,34.6 l2.8,4.3 l-2.8,4.3" stroke="#b0b0b0" stroke-width="1.8"/>
<path d="M27.5,34 v10 M30.5,34 v10" stroke="#757575" stroke-width="0.8"/>
<path d="M34.5,32 v14 M44.5,32 v14" stroke="#555" stroke-width="1"/>
<rect x="1.2" y="47" width="33" height="4.6" fill="#555"/><rect x="1.2" y="47" width="15.3" height="14.7" fill="#525252"/>
<rect x="16.5" y="51.6" width="17.8" height="11.9" fill="#7a7a7a"/>
<path d="M6,52.5 l2.6,2.7 l-2.6,2.7 Z" fill="#a8a8a8"/><path d="M9.3,53 h3 M9.3,55.2 h3 M9.3,57.4 h3" stroke="#a8a8a8" stroke-width="1"/>
<rect x="26" y="53" width="2.6" height="4" fill="#c9c9c9"/><rect x="26" y="57.6" width="2.6" height="3.2" fill="#bdbdbd"/><rect x="25" y="62.5" width="4.6" height="2.2" fill="#1e1e1e"/>
<path d="M20.3,78.3 L23.2,83" stroke="#2a2a2a" stroke-width="1.6" stroke-linecap="round"/><circle cx="17.5" cy="75" r="3.7" fill="#f4f4f4" stroke="#d0d0d0" stroke-width="0.8"/><circle cx="16.4" cy="76.2" r="1" fill="#555"/>
<path d="M14.5,98.5 L12.2,95.6 L13.1,95 L15.3,96.8 L14.4,92.6 L15.5,92.3 L16.8,96 L17.2,91.2 L18.4,91.2 L18.7,96 L20.2,92.2 L21.3,92.6 L20.6,97 L23,95.2 L23.8,96 L21,100 L20.8,102.8 L16.3,102.8 L16,100.5 Z" fill="#f4f4f4"/>
<path d="M12.2,115 L14.5,113 L21,113 L21,120 L18.8,122.3 L12.2,122.3 Z" fill="#f4f4f4"/><path d="M12.2,115 H18.8 V122.3 M18.8,115 L21,113" stroke="#9a9a9a" stroke-width="0.6"/><path d="M20.5,120.5 L21,125.6 L22.3,124.6 L23.3,126.6 L24.3,126 L23.3,124.1 L24.8,123.7 Z" fill="#f4f4f4" stroke="#2a2a2a" stroke-width="0.7"/>
<g transform="translate(-2,-1.2)"><path d="M13.3,133.5 L19.3,137 L16.8,137.7 L15.8,140.3 Z" fill="#3c3c3c"/><path d="M20.8,137.5 v9 M16.3,142 h9" stroke="#3c3c3c" stroke-width="1.2"/><path d="M20.8,136.3 l1.6,2 h-3.2 Z M20.8,147.7 l1.6,-2 h-3.2 Z M15.1,142 l2,-1.6 v3.2 Z M26.5,142 l-2,-1.6 v3.2 Z" fill="#3c3c3c"/></g>
<ellipse cx="18.5" cy="160" rx="6.3" ry="3.6" transform="rotate(-12 18.5 160)" stroke="#555" stroke-width="0.9"/><path d="M13.2,162.5 l-1,2.6" stroke="#555" stroke-width="0.9"/>
<g transform="translate(-1.5,-1.5)"><path d="M18.5,182.5 L23.3,188.5" stroke="#e4e4e4" stroke-width="1.1" stroke-linecap="round"/><path d="M17.2,176.8 v8.4 M13,181 h8.4 M14.2,178 l6,6 M20.2,178 l-6,6" stroke="#4a4a4a" stroke-width="0.6"/><circle cx="17.2" cy="181" r="1.9" fill="#eee"/></g>
<path d="M21.5,200.5 L16.2,209" stroke="#3a3a3a" stroke-width="2.2" stroke-linecap="round"/><path d="M15.8,209.6 L14,212.6" stroke="#d8d8d8" stroke-width="1" stroke-linecap="round"/>
<path d="M16,223 L20.2,230" stroke="#f4f4f4" stroke-width="3" stroke-linecap="round"/><path d="M20.6,230.6 L22.3,233.5" stroke="#3a3a3a" stroke-width="1.2" stroke-linecap="round"/><circle cx="15.6" cy="222.3" r="1.5" fill="#ddd" stroke="#555" stroke-width="0.5"/>
<path d="M15,243.5 L19.6,251" stroke="#f4f4f4" stroke-width="3.4" stroke-linecap="round"/><path d="M20,251.8 L22.4,255.6" stroke="#333" stroke-width="1.6" stroke-linecap="round"/>
<path d="M23,264 L15,273.5" stroke="#f4f4f4" stroke-width="1.8" stroke-linecap="round"/><path d="M11.5,274.5 C14,271.5 18,272 23.5,275 C19,276.5 14,276.8 11.5,274.5 Z" fill="#bcd6e4"/>
<path d="M11.5,292.5 L23,288 M13,287.8 L21.5,293.2 M17,286 L18,294" stroke="#444" stroke-width="0.9"/><circle cx="17.5" cy="290.5" r="1.2" fill="#ddd"/>
<rect x="13.2" y="312" width="7.4" height="4.2" rx="0.8" fill="#f4f4f4"/><rect x="12.8" y="316.8" width="8.2" height="3" rx="0.8" fill="#e0e0e0"/><rect x="15" y="309.3" width="3.6" height="2.6" fill="#ddd"/><path d="M19.5,309 L23.2,306.5 V312 Z" fill="#cfcfcf"/>
<path d="M14.5,328 L22.5,327 L24,330.5 L16,332 Z" fill="#e8e8e8"/><path d="M12.3,334 L20.5,332.6 L23,337.5 L14.8,339.2 Z" fill="#f4f4f4"/><path d="M14.5,328 L16,332 L12.3,334" stroke="#bbb" stroke-width="0.6"/>
<path d="M15.5,348.5 C17.5,352 18.7,353.5 18.7,355.6 A3.2,3.2 0 0 1 12.3,355.6 C12.3,353.5 13.5,352 15.5,348.5 Z" fill="#555"/><path d="M20.3,349.5 C22.3,353 23.6,354.6 23.6,356.6 A3.3,3.3 0 0 1 17,356.6 C17,354.6 18.3,353 20.3,349.5 Z" fill="#f4f4f4"/>
<rect x="7.5" y="370.5" width="19.5" height="18.5" fill="#6e8fa4"/>
<g transform="translate(10,373.5) scale(1)"><path d="M0.5,8.7 C1.5,6.5 4,4.4 6.6,3.2" stroke="#1c1c1c" stroke-width="1.8" stroke-linecap="round"/><path d="M4.2,6 L9.6,1.5 L14.3,7.6 L8.8,12.2 Z" fill="#f6f6f6"/><path d="M9.6,1.5 L14.3,7.6" stroke="#d0d0d0" stroke-width="0.8"/><path d="M7.3,3.6 L9.2,0.5 L11.6,0.2" stroke="#1c1c1c" stroke-width="0.9"/></g>
<rect x="11.3" y="395" width="12" height="11.5" fill="url(#gg)" stroke="#3a3a3a" stroke-width="0.8"/>
<path d="M12.5,427 L23.3,416.5" stroke="#333" stroke-width="1"/>
<rect x="12.8" y="437" width="9.6" height="11.5" stroke="#6a6a6a" stroke-width="0.9"/><path d="M12.8,441 h9.6 M17.6,441 v7.5 M14.5,444 h2 M19,444 h2" stroke="#6a6a6a" stroke-width="0.8"/>
<path d="M13.6,458.2 L13.6,469.8 L23.2,469.8 Z" fill="#bfe3f5" stroke="#5aa7d3" stroke-width="1"/><path d="M15.8,464 L15.8,467.8 L19,467.8 Z" fill="#7b7b7b" stroke="#5aa7d3" stroke-width="0.6"/>
<text x="17.6" y="490.6" font-family="Liberation Serif, serif" font-size="16" fill="#333" text-anchor="middle">A</text>
<ellipse cx="17.5" cy="504" rx="6.5" ry="5" fill="#f4f4f4"/><path d="M18.5,508 L20,511.4 L21.3,507.5 Z" fill="#f4f4f4"/>
<path d="M16.6,522.2 L20.8,531.3 L21.5,527.6 L24.2,526.3 Z" fill="#e8e8e8" stroke="#444" stroke-width="0.6"/><path d="M12.5,522.5 h2 M16.5,521.8 h5.6 M13,525 v6" stroke="#555" stroke-width="0.8"/><circle cx="13" cy="522.3" r="1" fill="#ddd"/>
<rect x="13.8" y="554.6" width="18.2" height="18.4" fill="#f2c8a0" stroke="#5e5e5e" stroke-width="0.6"/>
<rect x="2.6" y="542.9" width="18.4" height="18.7" fill="#fba0c0" stroke="#7db4d2" stroke-width="2.3"/><rect x="3.9" y="544.3" width="15.8" height="16" stroke="#26323c" stroke-width="0.8"/>
<rect x="2.0" y="575.5" width="3.75" height="3.75" fill="#fff"/><rect x="2.0" y="579.25" width="3.75" height="3.75" fill="#8c8c8c"/><rect x="5.75" y="575.5" width="3.75" height="3.75" fill="#8c8c8c"/><rect x="5.75" y="579.25" width="3.75" height="3.75" fill="#fff"/><rect x="9.5" y="575.5" width="3.75" height="3.75" fill="#fff"/><rect x="9.5" y="579.25" width="3.75" height="3.75" fill="#8c8c8c"/><rect x="13.25" y="575.5" width="3.75" height="3.75" fill="#8c8c8c"/><rect x="13.25" y="579.25" width="3.75" height="3.75" fill="#fff"/><rect x="17.0" y="575.5" width="3.75" height="3.75" fill="#fff"/><rect x="17.0" y="579.25" width="3.75" height="3.75" fill="#8c8c8c"/><rect x="20.75" y="575.5" width="3.75" height="3.75" fill="#8c8c8c"/><rect x="20.75" y="579.25" width="3.75" height="3.75" fill="#fff"/><rect x="24.5" y="575.5" width="3.75" height="3.75" fill="#fff"/><rect x="24.5" y="579.25" width="3.75" height="3.75" fill="#8c8c8c"/><rect x="28.25" y="575.5" width="3.75" height="3.75" fill="#8c8c8c"/><rect x="28.25" y="579.25" width="3.75" height="3.75" fill="#fff"/>
<circle cx="60.5" cy="63.9" r="8.6" fill="url(#qg)" stroke="#1c1c1c" stroke-width="2.2"/><path d="M61.5,65 L70.6,73.4" stroke="#1c1c1c" stroke-width="2.3"/><path d="M58.8,62.4 L64.8,63.2 L60,68 Z" fill="#1c1c1c"/>
<g transform="translate(50.5,95) scale(1)"><path d="M0.5,8.7 C1.5,6.5 4,4.4 6.6,3.2" stroke="#1c1c1c" stroke-width="1.8" stroke-linecap="round"/><path d="M4.2,6 L9.6,1.5 L14.3,7.6 L8.8,12.2 Z" fill="#f6f6f6"/><path d="M9.6,1.5 L14.3,7.6" stroke="#d0d0d0" stroke-width="0.8"/><path d="M7.3,3.6 L9.2,0.5 L11.6,0.2" stroke="#1c1c1c" stroke-width="0.9"/></g>
<rect x="65.6" y="92" width="3.4" height="3.4" fill="#9a9a9a" stroke="#3a3a3a" stroke-width="0.6"/>
<rect x="65.6" y="98.2" width="3.4" height="3.4" fill="#9a9a9a" stroke="#3a3a3a" stroke-width="0.6"/>
<rect x="65.6" y="104.5" width="3.4" height="3.4" fill="#9a9a9a" stroke="#3a3a3a" stroke-width="0.6"/>
<path d="M64.5,93.8 h-2.6 v3" stroke="#2a2a2a" stroke-width="0.7"/>
<g transform="translate(50.5,125) scale(1)"><path d="M0.5,8.7 C1.5,6.5 4,4.4 6.6,3.2" stroke="#1c1c1c" stroke-width="1.8" stroke-linecap="round"/><path d="M4.2,6 L9.6,1.5 L14.3,7.6 L8.8,12.2 Z" fill="#f6f6f6"/><path d="M9.6,1.5 L14.3,7.6" stroke="#d0d0d0" stroke-width="0.8"/><path d="M7.3,3.6 L9.2,0.5 L11.6,0.2" stroke="#1c1c1c" stroke-width="0.9"/></g>
<circle cx="66" cy="127" r="3.4" fill="#1f1f1f"/><circle cx="66" cy="127" r="4.6" stroke="#1f1f1f" stroke-width="1.6" stroke-dasharray="1.7 1.9"/><circle cx="66" cy="127" r="1.3" fill="#6e6e6e"/>
<path d="M57.3,152.5 C60.8,157 60.8,161 58.5,165.2 L56.1,165.2 C53.8,161 53.8,157 57.3,152.5 Z" fill="#e9e9e9" stroke="#1c1c1c" stroke-width="0.9"/><path d="M57.3,156 V165" stroke="#1c1c1c" stroke-width="0.7"/><rect x="53" y="165.8" width="8.6" height="1.8" fill="#1c1c1c"/><rect x="52.2" y="168.3" width="10.2" height="1.5" fill="#1c1c1c"/><path d="M62.2,154.5 h2 M62.2,161 h2 M62.2,167.3 h2 M62.8,154.5 V167.3" stroke="#1c1c1c" stroke-width="0.7"/><circle cx="67" cy="154.5" r="1.1" fill="#1c1c1c"/><circle cx="67" cy="161" r="1.7" fill="#1c1c1c"/><circle cx="67" cy="167.3" r="2.3" fill="#1c1c1c"/>
<circle cx="60.099999999999994" cy="197.1" r="9.2" fill="#e4e4e4"/>
<path d="M59.80,196.50 L53.72,190.42 A8.6,8.6 0 0 1 59.97,187.90 Z" fill="#ff2a1a"/>
<path d="M59.80,196.50 L59.80,187.90 A8.6,8.6 0 0 1 66.00,190.54 Z" fill="#ffd21a"/>
<path d="M59.80,196.50 L65.88,190.42 A8.6,8.6 0 0 1 68.40,196.67 Z" fill="#5fe01a"/>
<path d="M59.80,196.50 L68.40,196.50 A8.6,8.6 0 0 1 65.76,202.70 Z" fill="#1ad08a"/>
<path d="M59.80,196.50 L65.88,202.58 A8.6,8.6 0 0 1 59.63,205.10 Z" fill="#1a8cff"/>
<path d="M59.80,196.50 L59.80,205.10 A8.6,8.6 0 0 1 53.60,202.46 Z" fill="#3a1aff"/>
<path d="M59.80,196.50 L53.72,202.58 A8.6,8.6 0 0 1 51.20,196.33 Z" fill="#c81aff"/>
<path d="M59.80,196.50 L51.20,196.50 A8.6,8.6 0 0 1 53.84,190.30 Z" fill="#ff1a8c"/>
<circle cx="59.8" cy="196.5" r="3.4" fill="#8c8c8c"/><circle cx="60.599999999999994" cy="196.9" r="2" fill="#d6d6d6"/>
<rect x="51.3" y="219.0" width="5.8" height="5.8" fill="#1a6ad8"/>
<rect x="57.099999999999994" y="219.0" width="5.8" height="5.8" fill="#1a1a8c"/>
<rect x="62.9" y="219.0" width="5.8" height="5.8" fill="#e01a5a"/>
<rect x="51.3" y="224.8" width="5.8" height="5.8" fill="#d81a1a"/>
<rect x="57.099999999999994" y="224.8" width="5.8" height="5.8" fill="#ffffff"/>
<rect x="62.9" y="224.8" width="5.8" height="5.8" fill="#f4e01a"/>
<rect x="51.3" y="230.6" width="5.8" height="5.8" fill="#5ab41a"/>
<rect x="57.099999999999994" y="230.6" width="5.8" height="5.8" fill="#1a8c1a"/>
<rect x="62.9" y="230.6" width="5.8" height="5.8" fill="#0a0a0a"/>
<rect x="56.4" y="224" width="7.2" height="7.2" fill="#fff" stroke="#e01a1a" stroke-width="1.3"/><rect x="58.4" y="226.2" width="3.2" height="3" fill="#1a3ad8"/>
<rect x="51.3" y="247.5" width="17.4" height="17" fill="#1c1c1c"/><rect x="54" y="248" width="12" height="3.6" fill="#e8403a"/><rect x="54" y="252.2" width="12" height="8" fill="#3a9cf0"/><rect x="54" y="260.8" width="12" height="3.6" fill="#5ad24a"/>
<rect x="51.9" y="248.6" width="1.3" height="1.8" fill="#9a9a9a"/><rect x="66.8" y="248.6" width="1.3" height="1.8" fill="#9a9a9a"/>
<rect x="51.9" y="251.9" width="1.3" height="1.8" fill="#9a9a9a"/><rect x="66.8" y="251.9" width="1.3" height="1.8" fill="#9a9a9a"/>
<rect x="51.9" y="255.2" width="1.3" height="1.8" fill="#9a9a9a"/><rect x="66.8" y="255.2" width="1.3" height="1.8" fill="#9a9a9a"/>
<rect x="51.9" y="258.5" width="1.3" height="1.8" fill="#9a9a9a"/><rect x="66.8" y="258.5" width="1.3" height="1.8" fill="#9a9a9a"/>
<rect x="51.9" y="261.8" width="1.3" height="1.8" fill="#9a9a9a"/><rect x="66.8" y="261.8" width="1.3" height="1.8" fill="#9a9a9a"/>
<path d="M53.5,291.5 L57.2,295.6 C60,290.5 64,286.8 69.6,284" stroke="#d8262c" stroke-width="1.8" stroke-linecap="round"/><rect x="51.5" y="296.6" width="17.4" height="3.6" fill="#1a1a1a"/><rect x="52.8" y="300.8" width="14.6" height="1.7" fill="#e6e6e6"/>
<path d="M52,315.8 L60,313.2 L68,315.8 L60,318.40000000000003 Z" fill="#2a2a2a" stroke="#2a2a2a" stroke-width="0.5"/>
<path d="M52,318.4 L60,315.79999999999995 L68,318.4 L60,321.0 Z" fill="#e8e8e8" stroke="#2a2a2a" stroke-width="0.5"/>
<path d="M52,321 L60,318.4 L68,321 L60,323.6 Z" fill="#2a2a2a" stroke="#2a2a2a" stroke-width="0.5"/>
<path d="M52,323.6 L60,321.0 L68,323.6 L60,326.20000000000005 Z" fill="#e8e8e8" stroke="#2a2a2a" stroke-width="0.5"/>
<path d="M52,326.4 L60,323.79999999999995 L68,326.4 L60,329.0 Z" fill="#f4f4f4" stroke="#2a2a2a" stroke-width="0.5"/>
<rect x="107" y="32" width="30.5" height="22.5" fill="#717171"/>
<rect x="588" y="32" width="59.5" height="22.5" fill="#6b6b6b"/><path d="M618,32 v22.5" stroke="#777" stroke-width="0.7"/>
<path d="M186,32 v22.5" stroke="#6c6c6c" stroke-width="0.8"/>
<path d="M296,32 v22.5" stroke="#6c6c6c" stroke-width="0.8"/>
<path d="M362.7,32 v22.5" stroke="#6c6c6c" stroke-width="0.8"/>
<path d="M488,32 v22.5" stroke="#6c6c6c" stroke-width="0.8"/>
<path d="M588,32 v22.5" stroke="#6c6c6c" stroke-width="0.8"/>
<path d="M647.5,32 v22.5" stroke="#6c6c6c" stroke-width="0.8"/>
<rect x="85.8" y="37.0" width="5.6" height="5.6" fill="#2b2b2b"/>
<rect x="85.8" y="44.1" width="5.6" height="5.6" fill="#2b2b2b"/>
<rect x="92.89999999999999" y="37.0" width="5.6" height="5.6" fill="#2b2b2b"/>
<rect x="92.89999999999999" y="44.1" width="5.6" height="5.6" fill="#2b2b2b"/>
<rect x="117" y="38" width="10" height="7.4" fill="#dcdcdc" stroke="#2a2a2a" stroke-width="1"/><path d="M118.5,40 h4.5 v2.5 h-3" stroke="#2a2a2a" stroke-width="0.9"/><path d="M124.3,42.3 L129.3,43 L128.6,48 L125.3,48.5 L123,46 L124.6,45.3 Z" fill="#fafafa"/><path d="M121.8,49.2 L124.3,46.2" stroke="#2a2a2a" stroke-width="1"/>
<path d="M139.7,41.3 l4.9,-5 l4.9,5 Z M139.7,45.2 l4.9,5 l4.9,-5 Z" fill="#383838"/>
<path d="M280.4,41.3 l4.9,-5 l4.9,5 Z M280.4,45.2 l4.9,5 l4.9,-5 Z" fill="#383838"/>
<rect x="152" y="36.3" width="29" height="13.6" rx="2" fill="url(#lg)"/>
<path d="M166.3,44.3 C165,42.5 167,41 169,41.8 C171.2,42.8 170.8,45.6 168,46.4 C164.5,47.3 160.3,46 160.6,43 C161,40 165.5,38.6 169.5,39.2 C172.5,39.7 174.2,41.3 173.8,43.2" stroke="#303030" stroke-width="1.4" stroke-linecap="round"/>
<path d="M199.6,38 H205 L208.6,41.6 V49 H199.6 Z" fill="#f8f8f8"/><path d="M205,38 V41.6 H208.6" fill="#d4d4d4"/><path d="M198.8,35.6 v3 M197.3,37.1 h3" stroke="#1e1e1e" stroke-width="0.8"/>
<path d="M226.8,49 V41.4 H230.4 L231.4,42.6 H237 V44" stroke="#1e1e1e" stroke-width="1"/><path d="M229.2,43.6 H240 L237.4,49.3 H226.6 Z" fill="#ececec" stroke="#1e1e1e" stroke-width="0.7"/><path d="M233.2,40 C234.4,37.3 238,36.8 239.6,39.6" stroke="#1e1e1e" stroke-width="1.3"/><path d="M240.8,37.6 L240.4,41.2 L237.4,40.2 Z" fill="#1e1e1e"/>
<rect x="256.2" y="36.3" width="13.4" height="13.6" rx="0.8" fill="#1e1e1e"/><rect x="258.6" y="37.4" width="9.8" height="9" fill="#f6f6f6"/><rect x="258" y="47.3" width="10.6" height="1" fill="#8a8a8a"/>
<path d="M310.5,45.6 H317 C321.5,45.6 321.5,39.4 317,39.4 H316" stroke="#1e1e1e" stroke-width="1.7"/><path d="M306.3,45.6 L311.3,42 V49.2 Z" fill="#1e1e1e"/><path d="M309.5,39.4 h6" stroke="#1e1e1e" stroke-width="1.5" stroke-dasharray="1.3 0.9"/>
<path d="M346.5,42.6 H340 C335.5,42.6 335.5,48.4 340,48.4 H341" stroke="#8d8d8d" stroke-width="1.7"/><path d="M350.7,42.6 L345.7,39 V46.2 Z" fill="#8d8d8d"/><path d="M341.5,48.4 h6" stroke="#8d8d8d" stroke-width="1.5" stroke-dasharray="1.3 0.9"/>
<circle cx="385.40" cy="43.20" r="1.45" fill="#1e1e1e"/>
<circle cx="383.82" cy="47.02" r="1.45" fill="#1e1e1e"/>
<circle cx="380.00" cy="48.60" r="1.45" fill="#1e1e1e"/>
<circle cx="376.18" cy="47.02" r="1.45" fill="#1e1e1e"/>
<circle cx="374.60" cy="43.20" r="1.45" fill="#1e1e1e"/>
<circle cx="376.18" cy="39.38" r="1.45" fill="#1e1e1e"/>
<circle cx="380.00" cy="37.80" r="1.45" fill="#1e1e1e"/>
<circle cx="383.82" cy="39.38" r="1.45" fill="#1e1e1e"/>
<rect x="405.3" y="38.8" width="9" height="9" fill="#929292"/><rect x="406.3" y="36.2" width="7" height="1.9" rx="0.9" fill="#8c8c8c"/><rect x="406.3" y="48.5" width="7" height="1.9" rx="0.9" fill="#8c8c8c"/><rect x="402.6" y="39.8" width="1.9" height="7" rx="0.9" fill="#8c8c8c"/><rect x="415.1" y="39.8" width="1.9" height="7" rx="0.9" fill="#8c8c8c"/>
<g transform="translate(433,36.8) scale(1)"><path d="M0.5,8.7 C1.5,6.5 4,4.4 6.6,3.2" stroke="#1c1c1c" stroke-width="1.8" stroke-linecap="round"/><path d="M4.2,6 L9.6,1.5 L14.3,7.6 L8.8,12.2 Z" fill="#f6f6f6"/><path d="M9.6,1.5 L14.3,7.6" stroke="#d0d0d0" stroke-width="0.8"/><path d="M7.3,3.6 L9.2,0.5 L11.6,0.2" stroke="#1c1c1c" stroke-width="0.9"/></g>
<circle cx="470.6" cy="43" r="3.6" stroke="#1e1e1e" stroke-width="1.5"/><path d="M465.2,37.8 L468,40.4 M476,37.8 L473.2,40.4 M465.2,48.3 L468,45.6 M476,48.3 L473.2,45.6" stroke="#1e1e1e" stroke-width="1.4"/>
<circle cx="465" cy="37.6" r="1.4" fill="#1e1e1e"/>
<circle cx="476.2" cy="37.6" r="1.4" fill="#1e1e1e"/>
<circle cx="465" cy="48.5" r="1.4" fill="#1e1e1e"/>
<circle cx="476.2" cy="48.5" r="1.4" fill="#1e1e1e"/>
<rect x="499.6" y="39.2" width="9.6" height="8.8" stroke="#6b6b6b" stroke-width="1" stroke-dasharray="1.5 1"/><path d="M499,49 L510.6,37.6" stroke="#6b6b6b" stroke-width="1.1"/>
<rect x="530.2" y="36.5" width="12.6" height="12.2" fill="#8a8a8a"/><path d="M542.8,36.5 V48.7 H530.2 Z" fill="#6c6c6c"/><rect x="530.2" y="36.5" width="12.6" height="12.2" stroke="#6c6c6c" stroke-width="0.7"/>
<rect x="560.2" y="37.2" width="12.6" height="11.6" fill="#9c9c9c"/><rect x="561.5" y="38.5" width="10" height="9" stroke="#676767" stroke-width="1.2" stroke-dasharray="1.3 1.2"/>
<path d="M598,39.2 L607,48.6" stroke="#1a2a4a" stroke-width="1"/><path d="M598,39.2 V48.4" stroke="#1a2a4a" stroke-width="0.9"/><path d="M597.8,49 H607.6" stroke="#2b9ce8" stroke-width="1.4"/><path d="M608,37 V47" stroke="#f2f2f2" stroke-width="2.2" stroke-linecap="round"/><path d="M609.3,37 V48" stroke="#333" stroke-width="0.7"/>
<path d="M626.6,47.6 L632.3,41.4 H636" stroke="#1a2a4a" stroke-width="0.9"/><path d="M626.4,48.4 H638.6" stroke="#2b9ce8" stroke-width="1.3"/><path d="M637.3,37 V46.5" stroke="#f2f2f2" stroke-width="2.2" stroke-linecap="round"/><path d="M638.6,37 V47.6" stroke="#333" stroke-width="0.7"/>
<path d="M657.6,40.4 L669,47.2 M657.6,47.2 L669,40.4 M658,43.8 H668.6" stroke="#2b9ce8" stroke-width="1.1"/><path d="M663.2,36.6 V47" stroke="#f2f2f2" stroke-width="2.4" stroke-linecap="round"/><path d="M661.6,36.8 V48 M664.8,36.8 V48" stroke="#333" stroke-width="0.7"/>
<rect x="685.3" y="36.4" width="28" height="13.6" rx="1.5" fill="url(#lg)"/>
<ellipse cx="699.2" cy="42.6" rx="5.6" ry="5" fill="#1e1e1e"/><path d="M695.6,46 L694.6,49.4 L698.6,47.2 Z" fill="#1e1e1e"/>
<text x="699.2" y="45.6" font-family="Liberation Sans, sans-serif" font-weight="bold" font-size="8.4" fill="#fff" text-anchor="middle">?</text>
</svg><!--ICONSE-->
<div class="abs" id="right"></div>
<div class="key" style="top:1px"><b style="bottom:0px">esc</b></div>
<div class="key" style="top:47px"><b>control</b></div>
<div class="key" style="top:93px"><b>shift</b></div>
<div class="key" style="top:139px"><b>option</b></div>
<div class="key" style="top:185px"><b>command</b></div>
<div class="key" style="top:231px"><b>space</b></div>
<div class="key" style="top:277px"><em>T1</em></div>
<div class="key" style="top:323px"><em>T2</em></div>
<div class="key" style="top:369px"><em>T3</em></div>
<div class="key" style="top:415px"><em>T4</em></div>
<div class="key" style="top:461px"><em>T5</em></div>
<div class="key" style="top:507px"><em>T6</em></div>
<div class="key" style="top:553px"><em>T7</em></div>
<div class="abs st" style="left:756.5px;top:1px;font-size:9.2px;line-height:12px;letter-spacing:-0.3px;color:#fff">83%</div>
<!--KEYICONSS--><svg width="800" height="600" viewBox="0 0 800 600" fill="none">
<path d="M27,6.6 A6.4,6.4 0 0 1 36,6.6" stroke="#fff" stroke-width="1.5"/><path d="M28.8,8.3 A3.9,3.9 0 0 1 34.2,8.3" stroke="#fff" stroke-width="1.4"/><circle cx="31.5" cy="9.9" r="1.1" fill="#fff"/>
<path d="M738.2,3.6 A3.7,3.7 0 1 0 741.8,9.4 A4.4,4.4 0 0 1 738.2,3.6 Z" fill="#fff"/>
<path d="M746.8,5 L751.2,9 L749,11 V2.8 L751.2,4.9 L746.8,9" stroke="#fff" stroke-width="0.8"/>
<rect x="777.3" y="3.7" width="17.2" height="7.2" rx="1.6" stroke="#e8e8e8" stroke-width="0.8"/><rect x="778.7" y="4.7" width="12" height="5" rx="0.6" fill="#fff"/><path d="M795.8,6.1 v2.4" stroke="#e8e8e8" stroke-width="1"/>
<path d="M773.2,19.9 A5.6,5.6 0 1 1 771,23.4" stroke="#cfcfcf" stroke-width="0.9"/><path d="M776.2,24.2 L771.8,19.8" stroke="#cfcfcf" stroke-width="0.9"/><path d="M771.2,19.2 L775,20 L772,23 Z" fill="#cfcfcf"/>
<path d="M771.8,63.6 L776.6,59 L781.4,63.6" stroke="#cfcfcf" stroke-width="1"/>
<path d="M787,59.8 h5.4 l-2.7,3 Z" fill="#7d7d7d"/>
<path d="M777,104.9 L782.2,110.8 H779.4 V116.8 H774.6 V110.8 H771.8 Z" stroke="#cfcfcf" stroke-width="0.9"/>
<path d="M771,152.4 H774.8 L779,161.6 H782.4 M778.6,152.4 H782.4" stroke="#cfcfcf" stroke-width="0.9"/>
<path d="M774,198.6 V207.4 M779,198.6 V207.4 M772,200.5 H781 M772,205.5 H781" stroke="#cfcfcf" stroke-width="0.9"/><circle cx="772.3" cy="198.8" r="1.7" stroke="#cfcfcf" stroke-width="0.85"/><circle cx="780.7" cy="198.8" r="1.7" stroke="#cfcfcf" stroke-width="0.85"/><circle cx="772.3" cy="207.2" r="1.7" stroke="#cfcfcf" stroke-width="0.85"/><circle cx="780.7" cy="207.2" r="1.7" stroke="#cfcfcf" stroke-width="0.85"/>
<rect x="763.6" y="246.3" width="26.6" height="4.4" rx="1" fill="#c6c6c6"/>
</svg><!--KEYICONSE-->
</body>
</html>
